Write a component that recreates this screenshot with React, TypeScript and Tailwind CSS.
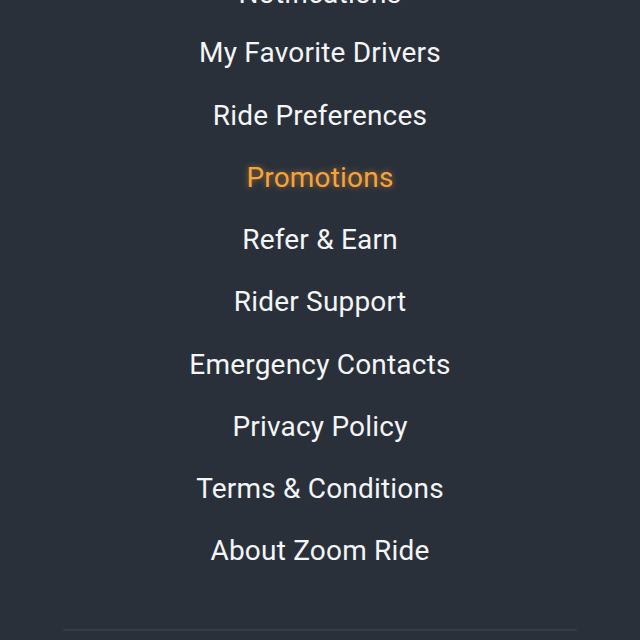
import React from "react";

const items = [
  "Notifications",
  "My Favorite Drivers",
  "Ride Preferences",
  "Promotions",
  "Refer & Earn",
  "Rider Support",
  "Emergency Contacts",
  "Privacy Policy",
  "Terms & Conditions",
  "About Zoom Ride",
];

export default function App() {
  return (
    <div
      className="w-[640px] h-[640px] overflow-hidden bg-[#29303a]"
      style={{ fontFamily: "Roboto, 'Noto Sans', sans-serif" }}
    >
      <div className="flex flex-col items-center mt-[-40px]">
        {items.map((t, i) => (
          <div
            key={t}
            className={
              "h-[62.25px] flex items-center justify-center text-[28px] tracking-[0.2px] " +
              (i === 0 ? "pt-[5px] " : "") +
              (t === "Promotions"
                ? "text-[#f7a33a] [text-shadow:0_0_6px_rgba(247,163,58,0.55)]"
                : "text-[#f4f5f6]")
            }
          >
            {t}
          </div>
        ))}
        <div className="mt-[46px] w-[514px] h-[2px] bg-[#363d47] rounded-full" />
      </div>
    </div>
  );
}
